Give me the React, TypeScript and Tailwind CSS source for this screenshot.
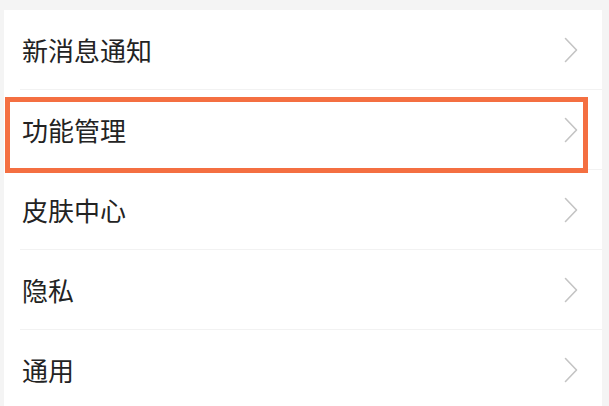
import React from "react";

const items = ["新消息通知", "功能管理", "皮肤中心", "隐私", "通用"];

function Chevron() {
  return (
    <svg width="14" height="26" viewBox="0 0 14 26" fill="none">
      <path d="M1.5 1.5 L12.5 13 L1.5 24.5" stroke="#c4c4c4" strokeWidth="1.6" strokeLinecap="round" strokeLinejoin="round" />
    </svg>
  );
}

export default function App() {
  return (
    <div
      className="relative w-[609px] h-[406px] overflow-hidden bg-[#f4f4f4] pt-[10px]"
      style={{ fontFamily: '"Noto Sans CJK SC", "Noto Sans", sans-serif' }}
    >
      <div className="ml-[4px] mr-[7px] bg-white">
        {items.map((t, i) => (
          <div key={t} className="relative flex h-[80px] items-center pl-[18px] pr-[24px]">
            <span className="flex-1 text-[26px] leading-none text-[#232323]">{t}</span>
            <Chevron />
            <div className="absolute bottom-0 left-[16px] right-0 h-px bg-[#f2f2f2]" />
          </div>
        ))}
      </div>
      <div className="absolute left-[5px] top-[97px] h-[76px] w-[583px] border-[5px] border-[#f46f41]" />
    </div>
  );
}
